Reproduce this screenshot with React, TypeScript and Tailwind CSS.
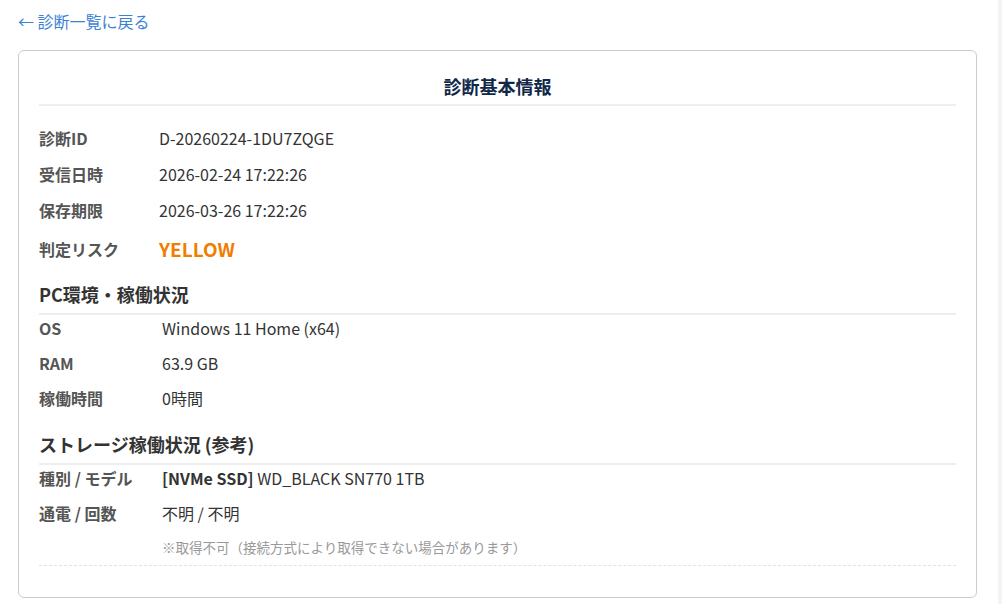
import React from 'react';

type Row = { label: string; value: React.ReactNode };

const basicRows: Row[] = [
  { label: '診断ID', value: 'D-20260224-1DU7ZQGE' },
  { label: '受信日時', value: '2026-02-24 17:22:26' },
  { label: '保存期限', value: '2026-03-26 17:22:26' },
];

const pcRows: Row[] = [
  { label: 'OS', value: 'Windows 11 Home (x64)' },
  { label: 'RAM', value: '63.9 GB' },
  { label: '稼働時間', value: '0時間' },
];

const storageRows: Row[] = [
  {
    label: '種別 / モデル',
    value: (
      <>
        <span className="font-bold">[NVMe SSD]</span> WD_BLACK SN770 1TB
      </>
    ),
  },
  { label: '通電 / 回数', value: '不明 / 不明' },
];

const InfoRow = ({ row, labelWidth }: { row: Row; labelWidth: string }) => (
  <div className="flex h-[35px] items-start pt-[1px] leading-6">
    <div className={`${labelWidth} shrink-0 font-bold text-[#555555]`}>{row.label}</div>
    <div className="text-[#333333]">{row.value}</div>
  </div>
);

const SectionHeading = ({ title, className }: { title: string; className: string }) => (
  <h3 className={`border-b-2 border-[#eeeeee] text-[18px] font-bold leading-[27px] text-[#333333] ${className}`}>
    {title}
  </h3>
);

export default function App() {
  return (
    <div
      className="flex min-h-[604px] w-full bg-white text-[16px]"
      style={{ fontFamily: '"Noto Sans CJK JP", "Noto Sans", sans-serif' }}
    >
      <div className="flex-1 pl-[18px] pr-[21px] pt-[9px]">
        {/* back link */}
        <a href="#" className="block leading-6 text-[#3b82d6] mb-[17px]">
          ← 診断一覧に戻る
        </a>

        <div className="rounded-md border border-[#cccccc] bg-white px-5 pt-[22px] pb-[31px]">
          <h2 className="border-b-2 border-[#eeeeee] pb-1 text-center text-[18px] font-bold leading-[27px] text-[#0f2847]">
            診断基本情報
          </h2>

          <div className="mt-5">
            {basicRows.map((r) => (
              <div key={r.label} className="flex h-9 items-start leading-6">
                <div className="w-[120px] shrink-0 font-bold text-[#555555]">{r.label}</div>
                <div className="text-[#333333]">{r.value}</div>
              </div>
            ))}
            <div className="flex h-8 items-center pb-[2px]">
              <div className="w-[120px] shrink-0 font-bold leading-6 text-[#555555]">判定リスク</div>
              <div className="text-[19px] font-bold leading-[28px] text-[#f07d00]">YELLOW</div>
            </div>
          </div>

          <SectionHeading title="PC環境・稼働状況" className="mt-[15px] pb-[5px]" />
          <div>
            {pcRows.map((r) => (
              <InfoRow key={r.label} row={r} labelWidth="w-[123px]" />
            ))}
          </div>

          <SectionHeading title="ストレージ稼働状況 (参考)" className="mt-[11px] pb-[5px]" />
          <div className="border-b border-dashed border-[#e2e2e2] pb-2">
            {storageRows.map((r) => (
              <InfoRow key={r.label} row={r} labelWidth="w-[123px]" />
            ))}
            <div className="pl-[123px] pt-[2px] text-[13.5px] leading-5 text-[#999999]">
              ※取得不可（接続方式により取得できない場合があります）
            </div>
          </div>
        </div>
      </div>
      <div className="w-1 shrink-0 bg-[#f4f4f4]" />
    </div>
  );
}
